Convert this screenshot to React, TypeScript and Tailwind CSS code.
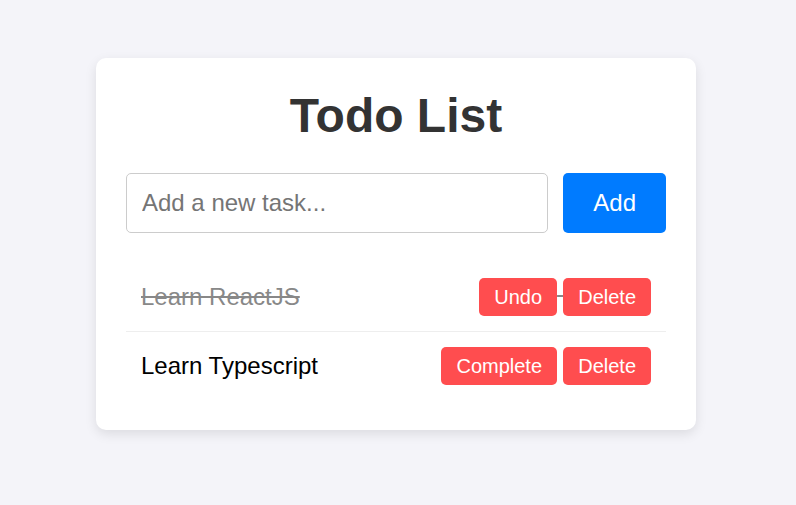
export default function App() {
  const todos = [
    { text: 'Learn ReactJS', done: true },
    { text: 'Learn Typescript', done: false },
  ];

  return (
    <div className="min-h-screen bg-[#f4f4f9] pt-[58px] font-['Liberation_Sans',Arial,sans-serif]">
      <div className="ml-[96px] w-[600px] rounded-[10px] bg-white p-[30px] shadow-[0_4px_12px_rgba(0,0,0,0.1)]">
        <h1 className="mb-[30px] text-center text-[48px] font-bold leading-[1.15] text-[#333]">Todo List</h1>

        {/* input row */}
        <div className="mb-[30px] flex gap-[15px]">
          <input
            type="text"
            placeholder="Add a new task..."
            className="h-[60px] flex-1 rounded-[5px] border border-[#ccc] px-[15px] text-[24px] text-[#333] outline-none placeholder:text-[#757575]"
          />
          <button className="h-[60px] rounded-[5px] bg-[#007bff] px-[30px] text-[24px] text-white">Add</button>
        </div>

        <ul>
          {todos.map((todo, index) => (
            <li
              key={index}
              className={
                todo.done
                  ? 'flex items-center justify-between border-b border-[#eee] p-[15px] text-[24px] text-[#888] line-through'
                  : 'flex items-center justify-between p-[15px] text-[24px] text-black'
              }
            >
              <span>{todo.text}</span>
              <div className="text-[22px] leading-none">
                <button className="inline-block h-[38px] rounded-[5px] bg-[#ff4d4f] px-[15px] align-middle text-[20px] text-white no-underline">
                  {todo.done ? 'Undo' : 'Complete'}
                </button>{' '}
                <button className="inline-block h-[38px] rounded-[5px] bg-[#ff4d4f] px-[15px] align-middle text-[20px] text-white no-underline">
                  Delete
                </button>
              </div>
            </li>
          ))}
        </ul>
      </div>
    </div>
  );
}
